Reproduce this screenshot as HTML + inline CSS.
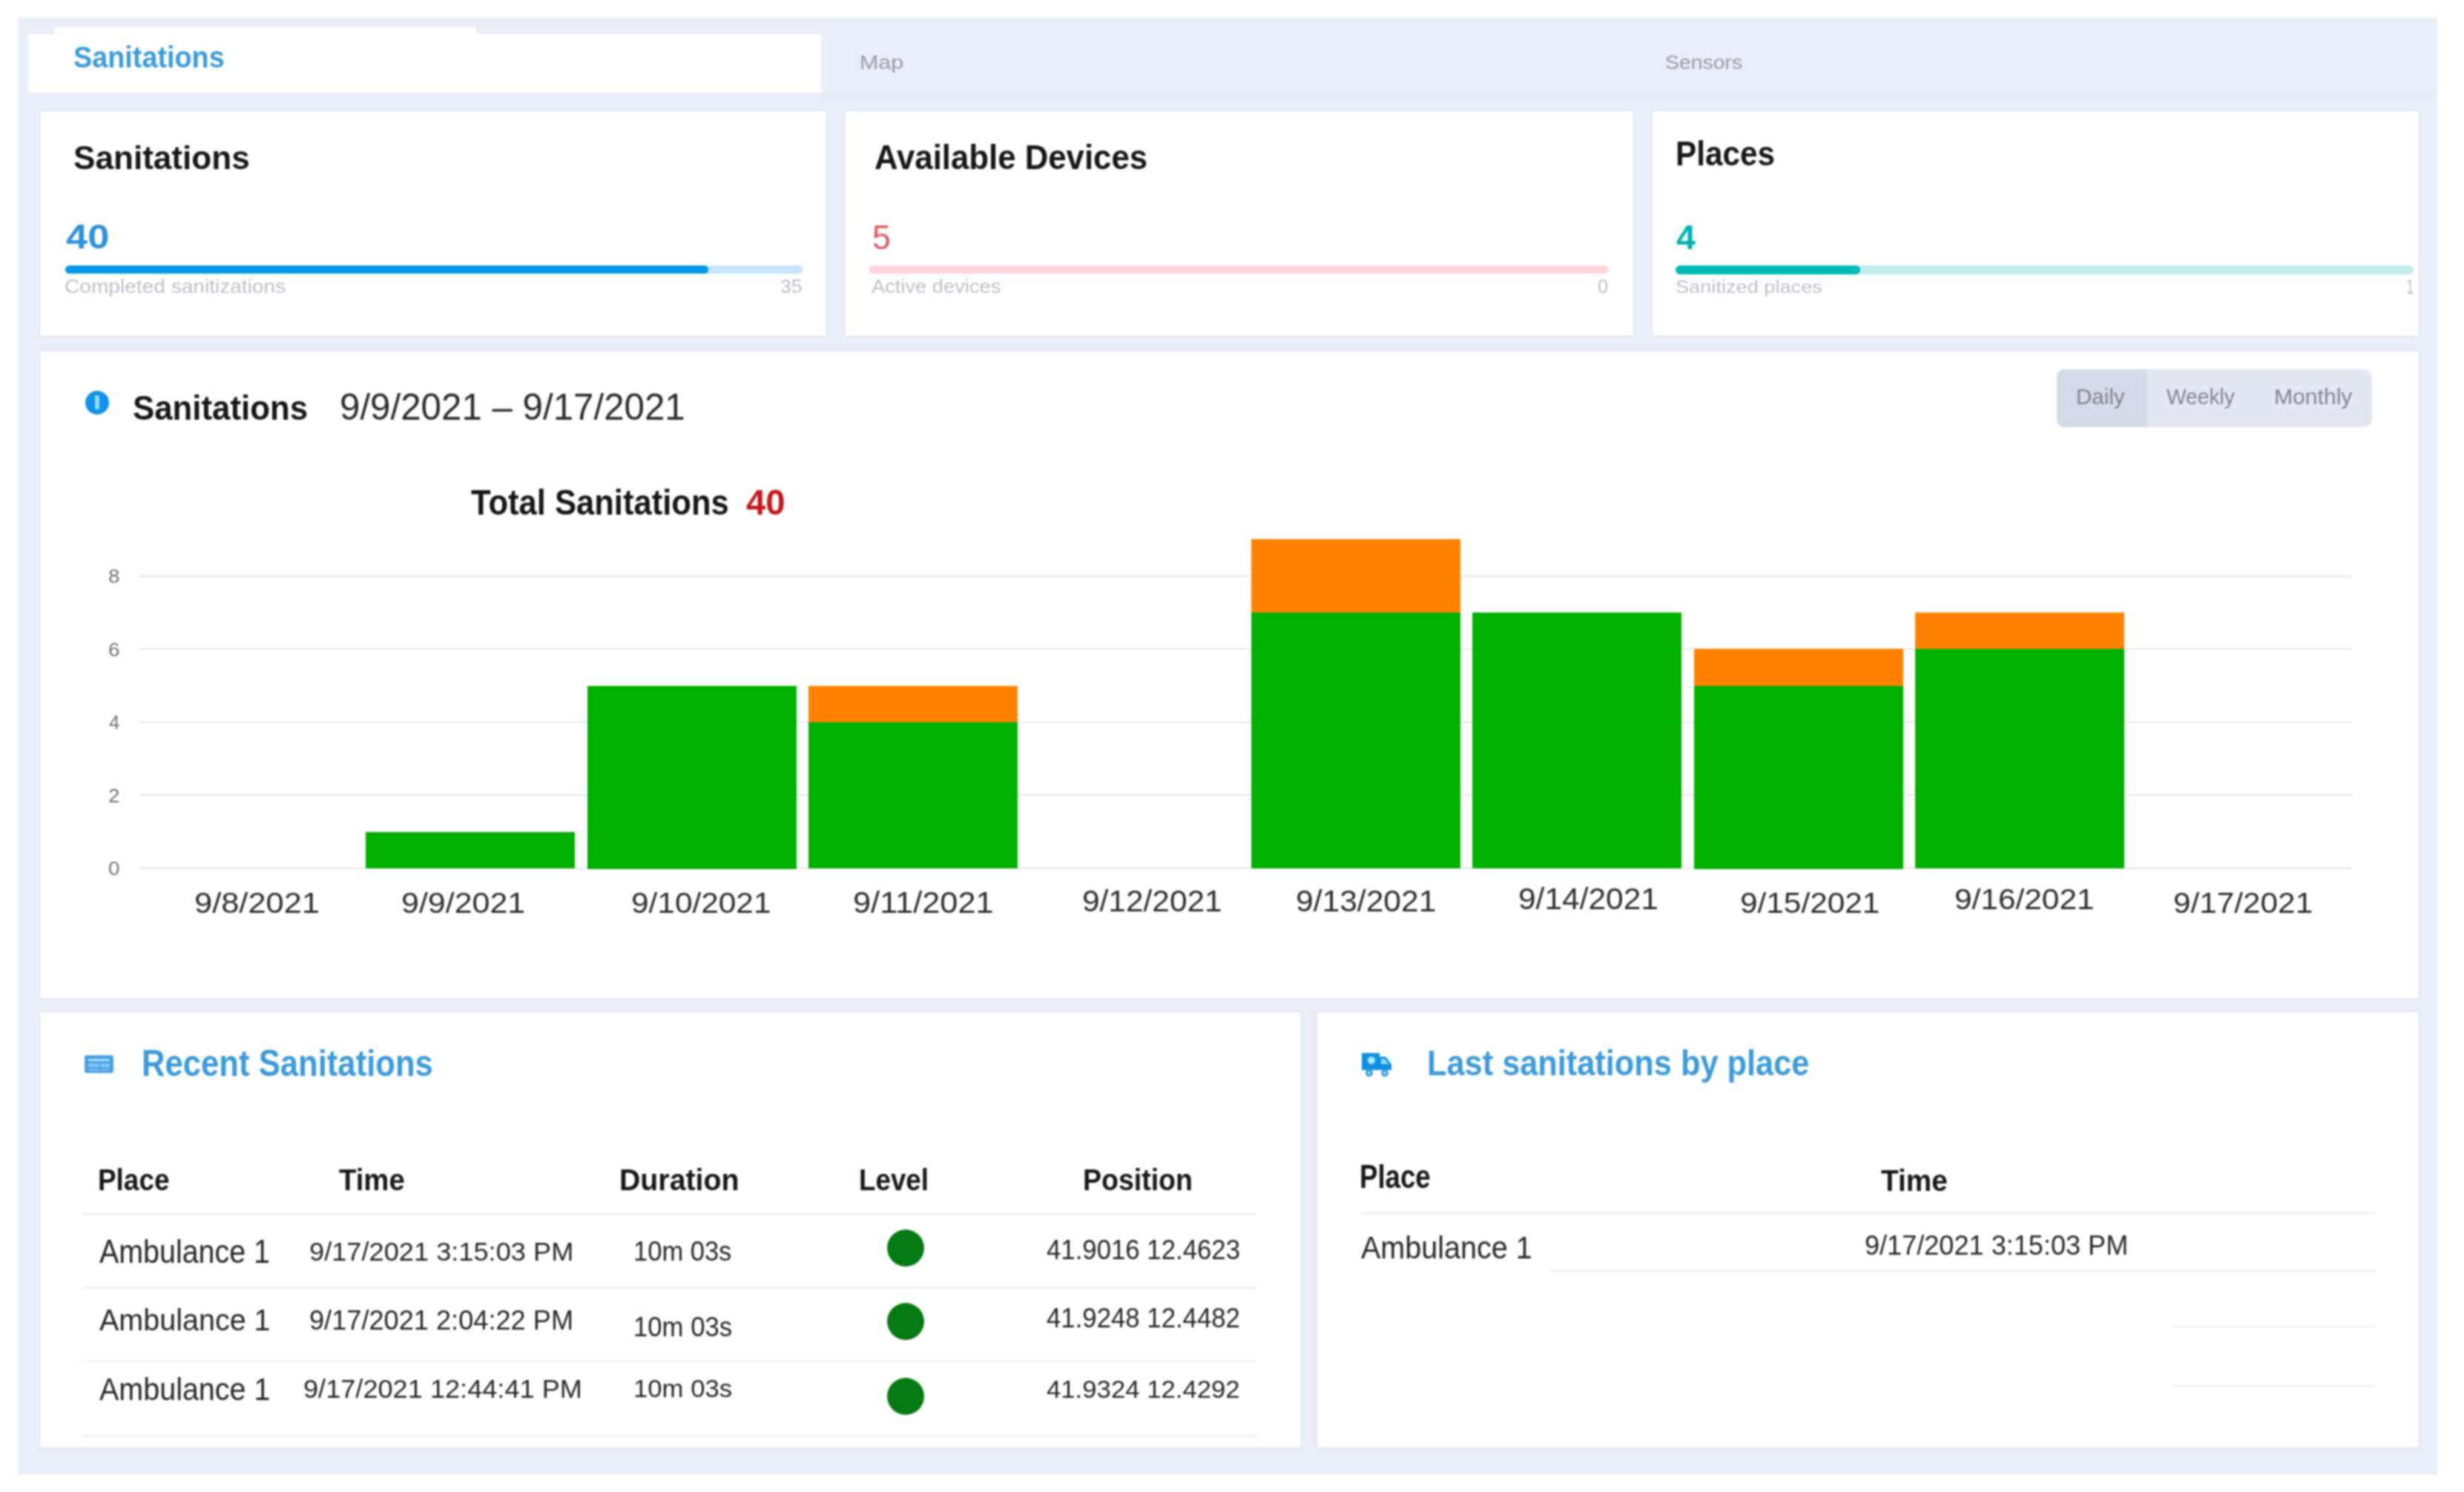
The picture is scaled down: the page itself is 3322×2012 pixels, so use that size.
<!DOCTYPE html>
<html><head><meta charset="utf-8"><style>
html,body{margin:0;padding:0;width:3322px;height:2012px;overflow:hidden;background:#ffffff}
body{position:relative;font-family:"Liberation Sans",sans-serif}
div,svg{position:absolute}
.t{white-space:nowrap;line-height:0;transform-origin:0 0}
</style></head><body>
<div id="w" style="left:0;top:0;width:3322px;height:2012px;filter:blur(0.8px)">
<div style="left:24.0px;top:24.0px;width:3262.0px;height:1964.0px;background:#eaeef6;"></div>
<div style="left:38.0px;top:46.0px;width:1069.0px;height:79.0px;background:#ffffff;"></div>
<div style="left:73.0px;top:36.5px;width:569.0px;height:10.5px;background:#ffffff;"></div>
<div style="left:1107.0px;top:126.0px;width:2179.0px;height:1.5px;background:#e1e5ed;"></div>
<div style="left:54.0px;top:150.0px;width:1060.0px;height:303.0px;background:#ffffff;border-radius:3px;box-shadow:0 0 2px 1px rgba(110,110,130,0.10)"></div>
<div style="left:1139.0px;top:150.0px;width:1063.0px;height:303.0px;background:#ffffff;border-radius:3px;box-shadow:0 0 2px 1px rgba(110,110,130,0.10)"></div>
<div style="left:2228.0px;top:150.0px;width:1033.0px;height:303.0px;background:#ffffff;border-radius:3px;box-shadow:0 0 2px 1px rgba(110,110,130,0.10)"></div>
<div style="left:87.5px;top:358.0px;width:994.5px;height:11.0px;background:#c6e3f7;border-radius:6px"></div>
<div style="left:87.5px;top:358.0px;width:867.5px;height:11.0px;background:#0097e6;border-radius:6px"></div>
<div style="left:1172.0px;top:358.0px;width:997.0px;height:11.0px;background:#ffd3d9;border-radius:6px"></div>
<div style="left:2259.0px;top:358.0px;width:995.0px;height:11.5px;background:#c0ecec;border-radius:6px"></div>
<div style="left:2259.0px;top:357.5px;width:249.0px;height:12.0px;background:#00b8b4;border-radius:6px"></div>
<div style="left:54.0px;top:473.5px;width:3207.0px;height:872.5px;background:#ffffff;border-radius:3px;box-shadow:0 0 2px 1px rgba(110,110,130,0.10)"></div>
<div style="left:2773.0px;top:498.0px;width:425.0px;height:78.0px;background:#e3e8f0;border-radius:10px"></div>
<div style="left:2773.0px;top:498.0px;width:122.0px;height:78.0px;background:#d5dbe7;border-radius:10px 0 0 10px"></div>
<div style="left:188.0px;top:775.6px;width:2982.0px;height:2.0px;background:#e7e7e9;"></div>
<div style="left:188.0px;top:874.2px;width:2982.0px;height:2.0px;background:#e7e7e9;"></div>
<div style="left:188.0px;top:972.8px;width:2982.0px;height:2.0px;background:#e7e7e9;"></div>
<div style="left:188.0px;top:1071.4px;width:2982.0px;height:2.0px;background:#e7e7e9;"></div>
<div style="left:188.0px;top:1170.0px;width:2982.0px;height:2.0px;background:#e7e7e9;"></div>
<div style="left:493.0px;top:1121.7px;width:282.0px;height:49.8px;background:#00b000;"></div>
<div style="left:791.5px;top:924.5px;width:282.0px;height:247.0px;background:#00b000;"></div>
<div style="left:1089.9px;top:924.5px;width:282.0px;height:50.3px;background:#ff8200;"></div>
<div style="left:1089.9px;top:973.8px;width:282.0px;height:197.7px;background:#00b000;"></div>
<div style="left:1686.8px;top:727.3px;width:282.0px;height:99.6px;background:#ff8200;"></div>
<div style="left:1686.8px;top:825.9px;width:282.0px;height:345.6px;background:#00b000;"></div>
<div style="left:1985.2px;top:825.9px;width:282.0px;height:345.6px;background:#00b000;"></div>
<div style="left:2283.7px;top:875.2px;width:282.0px;height:50.3px;background:#ff8200;"></div>
<div style="left:2283.7px;top:924.5px;width:282.0px;height:247.0px;background:#00b000;"></div>
<div style="left:2582.2px;top:825.9px;width:282.0px;height:50.3px;background:#ff8200;"></div>
<div style="left:2582.2px;top:875.2px;width:282.0px;height:296.3px;background:#00b000;"></div>
<div style="left:114.5px;top:526.5px;width:32px;height:32px;border-radius:50%;background:#1192e8"></div>
<div style="left:128.0px;top:533.0px;width:5.5px;height:19.0px;background:#8fdcff;border-radius:2px"></div>
<div style="left:54.0px;top:1365.0px;width:1700.0px;height:587.0px;background:#ffffff;border-radius:3px;box-shadow:0 0 2px 1px rgba(110,110,130,0.10)"></div>
<div style="left:1776.0px;top:1365.0px;width:1485.0px;height:587.0px;background:#ffffff;border-radius:3px;box-shadow:0 0 2px 1px rgba(110,110,130,0.10)"></div>
<div style="left:114.0px;top:1423.0px;width:38.5px;height:24.0px;background:#4a9fe2;border-radius:3px"></div>
<div style="left:119.0px;top:1427.5px;width:28.5px;height:3.5px;background:#a6e0ff;"></div>
<div style="left:119.0px;top:1434.0px;width:14.5px;height:5.0px;background:#7cc6f7;"></div>
<div style="left:135.5px;top:1434.0px;width:12.0px;height:5.0px;background:#7cc6f7;"></div>
<div style="left:119.0px;top:1441.0px;width:14.5px;height:3.0px;background:#6ab8f3;"></div>
<div style="left:135.5px;top:1441.0px;width:12.0px;height:3.0px;background:#6ab8f3;"></div>
<svg style="position:absolute;left:1830px;top:1414px" width="52" height="44" viewBox="0 0 52 44"><path d="M6 6 H30 V11 H38 L46 21 V29 H6 Z" fill="#118fe2"/><circle cx="16" cy="33" r="5" fill="#3c9ad6"/><circle cx="37" cy="33" r="5" fill="#3c9ad6"/><circle cx="16" cy="33" r="2" fill="#a8e4ff"/><circle cx="37" cy="33" r="2" fill="#a8e4ff"/><circle cx="19" cy="16" r="5" fill="#a8eeff"/><path d="M32 14 H37 L42 21 H32 Z" fill="#8fdcff"/></svg>
<div style="left:111.0px;top:1635.5px;width:1582.0px;height:2.0px;background:#ececee;"></div>
<div style="left:111.0px;top:1736.0px;width:1582.0px;height:2.0px;background:#ececee;"></div>
<div style="left:111.0px;top:1834.0px;width:1582.0px;height:1.5px;background:#f1f1f3;"></div>
<div style="left:111.0px;top:1935.5px;width:1582.0px;height:2.0px;background:#ececee;"></div>
<div style="left:1835.0px;top:1634.5px;width:1367.0px;height:2.0px;background:#ececee;"></div>
<div style="left:2090.0px;top:1713.0px;width:1112.0px;height:2.0px;background:#ececee;"></div>
<div style="left:2928.0px;top:1788.0px;width:274.0px;height:2.0px;background:#efeff1;"></div>
<div style="left:2928.0px;top:1868.0px;width:274.0px;height:2.0px;background:#efeff1;"></div>
<div style="left:1196px;top:1658.4px;width:50px;height:50px;border-radius:50%;background:#067a12"></div>
<div style="left:1196px;top:1757.0px;width:50px;height:50px;border-radius:50%;background:#067a12"></div>
<div style="left:1196px;top:1857.7px;width:50px;height:50px;border-radius:50%;background:#067a12"></div>
<div class="t" style="left:99.08px;top:76.60px;font-size:40.86px;font-weight:700;color:#3b9ad9;transform:scaleX(0.9248)">Sanitations</div>
<div class="t" style="left:1158.94px;top:83.80px;font-size:25.80px;font-weight:400;color:#9a98a9;transform:scaleX(1.1796)">Map</div>
<div class="t" style="left:2244.90px;top:83.60px;font-size:25.77px;font-weight:400;color:#9a98a9;transform:scaleX(1.1011)">Sensors</div>
<div class="t" style="left:99.00px;top:213.00px;font-size:44.29px;font-weight:700;color:#161616;transform:scaleX(0.9959)">Sanitations</div>
<div class="t" style="left:1179.07px;top:212.00px;font-size:47.14px;font-weight:700;color:#161616;transform:scaleX(0.9284)">Available Devices</div>
<div class="t" style="left:2258.77px;top:207.00px;font-size:46.38px;font-weight:700;color:#161616;transform:scaleX(0.9110)">Places</div>
<div class="t" style="left:89.20px;top:320.30px;font-size:45.36px;font-weight:700;color:#2f90da;transform:scaleX(1.1579)">40</div>
<div class="t" style="left:1176.04px;top:319.80px;font-size:46.67px;font-weight:400;color:#e5535f;transform:scaleX(0.9565)">5</div>
<div class="t" style="left:2260.00px;top:320.20px;font-size:45.94px;font-weight:700;color:#00b3ae;transform:scaleX(1.0192)">4</div>
<div class="t" style="left:87.38px;top:386.20px;font-size:25.00px;font-weight:400;color:#bfbec8;transform:scaleX(1.1235)">Completed sanitizations</div>
<div class="t" style="left:1052.00px;top:386.20px;font-size:25.57px;font-weight:400;color:#bfbec8;transform:scaleX(1.0419)">35</div>
<div class="t" style="left:1174.60px;top:386.20px;font-size:25.94px;font-weight:400;color:#bfbec8;transform:scaleX(1.0518)">Active devices</div>
<div class="t" style="left:2154.00px;top:386.20px;font-size:25.57px;font-weight:400;color:#bfbec8;transform:scaleX(1.0000)">0</div>
<div class="t" style="left:2258.50px;top:387.20px;font-size:24.79px;font-weight:400;color:#bfbec8;transform:scaleX(1.0963)">Sanitized places</div>
<div class="t" style="left:3244.20px;top:386.90px;font-size:26.96px;font-weight:400;color:#bfbec8;transform:scaleX(0.7000)">1</div>
<div class="t" style="left:179.07px;top:550.00px;font-size:47.14px;font-weight:700;color:#161616;transform:scaleX(0.9294)">Sanitations</div>
<div class="t" style="left:458.03px;top:549.00px;font-size:50.00px;font-weight:400;color:#2a2a2a;transform:scaleX(0.9854)">9/9/2021 – 9/17/2021</div>
<div class="t" style="left:635.00px;top:677.50px;font-size:47.29px;font-weight:700;color:#161616;transform:scaleX(0.9216)">Total Sanitations</div>
<div class="t" style="left:1006.00px;top:677.50px;font-size:47.97px;font-weight:700;color:#c3161c;transform:scaleX(0.9869)">40</div>
<div class="t" style="left:146.35px;top:776.90px;font-size:26.57px;font-weight:400;color:#707070;transform:scaleX(1.0462)">8</div>
<div class="t" style="left:146.35px;top:875.50px;font-size:26.57px;font-weight:400;color:#707070;transform:scaleX(1.0462)">6</div>
<div class="t" style="left:147.40px;top:974.10px;font-size:26.57px;font-weight:400;color:#707070;transform:scaleX(0.9714)">4</div>
<div class="t" style="left:146.35px;top:1072.70px;font-size:26.57px;font-weight:400;color:#707070;transform:scaleX(1.0462)">2</div>
<div class="t" style="left:146.35px;top:1171.30px;font-size:26.57px;font-weight:400;color:#707070;transform:scaleX(1.0462)">0</div>
<div class="t" style="left:262.20px;top:1217.40px;font-size:39.43px;font-weight:400;color:#2c2c2c;transform:scaleX(1.1012)">9/8/2021</div>
<div class="t" style="left:541.41px;top:1217.40px;font-size:39.43px;font-weight:400;color:#2c2c2c;transform:scaleX(1.0899)">9/9/2021</div>
<div class="t" style="left:850.91px;top:1218.00px;font-size:38.71px;font-weight:400;color:#2c2c2c;transform:scaleX(1.0946)">9/10/2021</div>
<div class="t" style="left:1149.94px;top:1216.50px;font-size:40.71px;font-weight:400;color:#2c2c2c;transform:scaleX(1.0649)">9/11/2021</div>
<div class="t" style="left:1459.48px;top:1214.80px;font-size:41.43px;font-weight:400;color:#2c2c2c;transform:scaleX(1.0239)">9/12/2021</div>
<div class="t" style="left:1746.67px;top:1215.40px;font-size:41.29px;font-weight:400;color:#2c2c2c;transform:scaleX(1.0308)">9/13/2021</div>
<div class="t" style="left:2046.75px;top:1212.00px;font-size:40.43px;font-weight:400;color:#2c2c2c;transform:scaleX(1.0503)">9/14/2021</div>
<div class="t" style="left:2345.88px;top:1218.00px;font-size:37.86px;font-weight:400;color:#2c2c2c;transform:scaleX(1.1184)">9/15/2021</div>
<div class="t" style="left:2634.91px;top:1213.30px;font-size:39.00px;font-weight:400;color:#2c2c2c;transform:scaleX(1.0866)">9/16/2021</div>
<div class="t" style="left:2929.89px;top:1218.00px;font-size:38.14px;font-weight:400;color:#2c2c2c;transform:scaleX(1.1093)">9/17/2021</div>
<div class="t" style="left:2798.97px;top:534.80px;font-size:29.13px;font-weight:400;color:#85818f;transform:scaleX(1.0131)">Daily</div>
<div class="t" style="left:2920.70px;top:534.80px;font-size:29.13px;font-weight:400;color:#85818f;transform:scaleX(0.9676)">Weekly</div>
<div class="t" style="left:3065.93px;top:534.80px;font-size:29.13px;font-weight:400;color:#85818f;transform:scaleX(1.0337)">Monthly</div>
<div class="t" style="left:191.34px;top:1434.00px;font-size:49.28px;font-weight:700;color:#3b9ad9;transform:scaleX(0.8859)">Recent Sanitations</div>
<div class="t" style="left:132.21px;top:1591.00px;font-size:41.30px;font-weight:700;color:#161616;transform:scaleX(0.8937)">Place</div>
<div class="t" style="left:457.40px;top:1591.00px;font-size:40.71px;font-weight:700;color:#161616;transform:scaleX(0.9410)">Time</div>
<div class="t" style="left:834.60px;top:1591.00px;font-size:41.30px;font-weight:700;color:#161616;transform:scaleX(0.9514)">Duration</div>
<div class="t" style="left:1158.22px;top:1591.00px;font-size:41.30px;font-weight:700;color:#161616;transform:scaleX(0.8900)">Level</div>
<div class="t" style="left:1459.68px;top:1591.00px;font-size:41.30px;font-weight:700;color:#161616;transform:scaleX(0.9082)">Position</div>
<div class="t" style="left:134.00px;top:1687.80px;font-size:43.62px;font-weight:400;color:#262626;transform:scaleX(0.9033)">Ambulance 1</div>
<div class="t" style="left:416.99px;top:1688.00px;font-size:35.71px;font-weight:400;color:#262626;transform:scaleX(1.0141)">9/17/2021 3:15:03 PM</div>
<div class="t" style="left:854.13px;top:1688.00px;font-size:36.96px;font-weight:400;color:#262626;transform:scaleX(0.9339)">10m 03s</div>
<div class="t" style="left:1410.80px;top:1686.00px;font-size:36.43px;font-weight:400;color:#262626;transform:scaleX(0.9545)">41.9016 12.4623</div>
<div class="t" style="left:134.00px;top:1780.30px;font-size:41.01px;font-weight:400;color:#262626;transform:scaleX(0.9633)">Ambulance 1</div>
<div class="t" style="left:417.01px;top:1781.00px;font-size:36.71px;font-weight:400;color:#262626;transform:scaleX(0.9857)">9/17/2021 2:04:22 PM</div>
<div class="t" style="left:854.10px;top:1790.00px;font-size:36.52px;font-weight:400;color:#262626;transform:scaleX(0.9503)">10m 03s</div>
<div class="t" style="left:1410.80px;top:1778.00px;font-size:36.29px;font-weight:400;color:#262626;transform:scaleX(0.9580)">41.9248 12.4482</div>
<div class="t" style="left:134.00px;top:1872.50px;font-size:42.75px;font-weight:400;color:#262626;transform:scaleX(0.9235)">Ambulance 1</div>
<div class="t" style="left:408.69px;top:1872.70px;font-size:35.71px;font-weight:400;color:#262626;transform:scaleX(1.0126)">9/17/2021 12:44:41 PM</div>
<div class="t" style="left:853.96px;top:1871.50px;font-size:34.06px;font-weight:400;color:#262626;transform:scaleX(1.0191)">10m 03s</div>
<div class="t" style="left:1410.80px;top:1872.70px;font-size:33.86px;font-weight:400;color:#262626;transform:scaleX(1.0255)">41.9324 12.4292</div>
<div class="t" style="left:1924.28px;top:1434.00px;font-size:47.83px;font-weight:700;color:#3b9ad9;transform:scaleX(0.9060)">Last sanitations by place</div>
<div class="t" style="left:1833.32px;top:1587.00px;font-size:43.48px;font-weight:700;color:#161616;transform:scaleX(0.8422)">Place</div>
<div class="t" style="left:2536.00px;top:1591.60px;font-size:40.86px;font-weight:700;color:#161616;transform:scaleX(0.9481)">Time</div>
<div class="t" style="left:1835.00px;top:1683.00px;font-size:42.03px;font-weight:400;color:#262626;transform:scaleX(0.9411)">Ambulance 1</div>
<div class="t" style="left:2514.04px;top:1679.40px;font-size:37.71px;font-weight:400;color:#262626;transform:scaleX(0.9575)">9/17/2021 3:15:03 PM</div>
</div>
</body></html>
